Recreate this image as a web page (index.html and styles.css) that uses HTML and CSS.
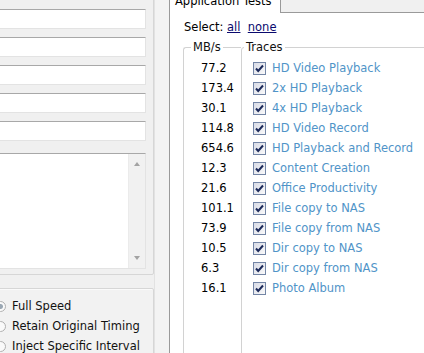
FILE: index.html
```html
<!DOCTYPE html>
<html>
<head>
<meta charset="utf-8">
<link rel="stylesheet" href="styles.css">
</head>
<body>
<div class="app">
  <div class="left">
    <div class="group top-group">
      <div class="input"></div>
      <div class="input"></div>
      <div class="input"></div>
      <div class="input"></div>
      <div class="input"></div>
      <div class="textarea">
        <div class="scrollbar">
          <span class="arrow up"></span>
          <span class="arrow down"></span>
        </div>
      </div>
    </div>
    <div class="group radio-group">
      <div class="radio-row"><span class="radio checked"></span>Full Speed</div>
      <div class="radio-row"><span class="radio"></span>Retain Original Timing</div>
      <div class="radio-row"><span class="radio"></span>Inject Specific Interval</div>
    </div>
  </div>
  <div class="gutter"></div>
  <div class="right">
    <div class="tabstrip">
      <div class="tab">Application Tests</div>
      <div class="tab-rest"></div>
    </div>
    <div class="content">
      <div class="select">Select: <a class="link" href="#">all</a>&nbsp; <a class="link" href="#">none</a></div>
      <div class="sets">
        <fieldset class="fs mbs">
          <legend>MB/s</legend>
          <div class="num">77.2</div>
          <div class="num">173.4</div>
          <div class="num">30.1</div>
          <div class="num">114.8</div>
          <div class="num">654.6</div>
          <div class="num">12.3</div>
          <div class="num">21.6</div>
          <div class="num">101.1</div>
          <div class="num">73.9</div>
          <div class="num">10.5</div>
          <div class="num">6.3</div>
          <div class="num">16.1</div>
        </fieldset>
        <fieldset class="fs traces">
          <legend>Traces</legend>
          <div class="trace"><span class="cb"><svg viewBox="0 0 11 11"><path d="M2 5.5 L4.2 8 L9 2.5" /></svg></span>HD Video Playback</div>
          <div class="trace"><span class="cb"><svg viewBox="0 0 11 11"><path d="M2 5.5 L4.2 8 L9 2.5" /></svg></span>2x HD Playback</div>
          <div class="trace"><span class="cb"><svg viewBox="0 0 11 11"><path d="M2 5.5 L4.2 8 L9 2.5" /></svg></span>4x HD Playback</div>
          <div class="trace"><span class="cb"><svg viewBox="0 0 11 11"><path d="M2 5.5 L4.2 8 L9 2.5" /></svg></span>HD Video Record</div>
          <div class="trace"><span class="cb"><svg viewBox="0 0 11 11"><path d="M2 5.5 L4.2 8 L9 2.5" /></svg></span>HD Playback and Record</div>
          <div class="trace"><span class="cb"><svg viewBox="0 0 11 11"><path d="M2 5.5 L4.2 8 L9 2.5" /></svg></span>Content Creation</div>
          <div class="trace"><span class="cb"><svg viewBox="0 0 11 11"><path d="M2 5.5 L4.2 8 L9 2.5" /></svg></span>Office Productivity</div>
          <div class="trace"><span class="cb"><svg viewBox="0 0 11 11"><path d="M2 5.5 L4.2 8 L9 2.5" /></svg></span>File copy to NAS</div>
          <div class="trace"><span class="cb"><svg viewBox="0 0 11 11"><path d="M2 5.5 L4.2 8 L9 2.5" /></svg></span>File copy from NAS</div>
          <div class="trace"><span class="cb"><svg viewBox="0 0 11 11"><path d="M2 5.5 L4.2 8 L9 2.5" /></svg></span>Dir copy to NAS</div>
          <div class="trace"><span class="cb"><svg viewBox="0 0 11 11"><path d="M2 5.5 L4.2 8 L9 2.5" /></svg></span>Dir copy from NAS</div>
          <div class="trace"><span class="cb"><svg viewBox="0 0 11 11"><path d="M2 5.5 L4.2 8 L9 2.5" /></svg></span>Photo Album</div>
        </fieldset>
      </div>
    </div>
  </div>
</div>
</body>
</html>
```

FILE: styles.css
```css
html, body {
  margin: 0;
  padding: 0;
}
body {
  width: 424px;
  height: 353px;
  overflow: hidden;
  background: #f0f0f0;
}
.app {
  display: flex;
  width: 424px;
  height: 353px;
  overflow: hidden;
  font-family: "DejaVu Sans", Verdana, sans-serif;
  font-size: 11.5px;
  color: #000;
  background: #f0f0f0;
}
.left {
  flex: none;
  width: 164px;
  margin-left: -10px;
  display: flex;
  flex-direction: column;
}
.group {
  border: 1px solid #d6d6d6;
  box-shadow: inset 1px 1px 0 #fafafa;
  border-radius: 2px;
}
.top-group {
  flex: none;
  margin-top: -10px;
  height: 285px;
  box-sizing: border-box;
  padding: 18px 7px 0 6px;
  display: flex;
  flex-direction: column;
  gap: 8px;
}
.input {
  height: 20px;
  flex: none;
  box-sizing: border-box;
  background: #fff;
  border: 1px solid #e3e3e3;
  border-top-color: #a8a8a8;
}
.textarea {
  margin-top: 4px;
  height: 116px;
  flex: none;
  box-sizing: border-box;
  background: #fff;
  border: 1px solid #e3e3e3;
  border-top-color: #a8a8a8;
  display: flex;
  justify-content: flex-end;
}
.scrollbar {
  width: 16px;
  background: #f1f1f1;
  border-left: 1px solid #ebebeb;
  position: relative;
}
.arrow {
  position: absolute;
  left: 5px;
  width: 0;
  height: 0;
  border-left: 3px solid transparent;
  border-right: 3px solid transparent;
}
.arrow.up {
  top: 8px;
  border-bottom: 4px solid #a3a3a3;
}
.arrow.down {
  bottom: 8px;
  border-top: 4px solid #a3a3a3;
}
.radio-group {
  margin-top: 13px;
  flex: none;
  height: 80px;
  box-sizing: border-box;
  padding: 7px 0 0 4px;
  background: #f2f2f2;
}
.radio-row {
  height: 20px;
  line-height: 20px;
  display: flex;
  align-items: center;
  white-space: nowrap;
  color: #111;
}
.radio {
  flex: none;
  width: 11px;
  height: 11px;
  border: 1px solid #b0b0b0;
  border-radius: 50%;
  background: #fafafa;
  margin-right: 6px;
  box-sizing: border-box;
}
.radio.checked {
  background: radial-gradient(circle, #9aa7b3 0 2px, #fafafa 3px);
}
.gutter {
  flex: none;
  width: 14px;
  background: #f3f3f3;
  border-left: 1px solid #e2e2e2;
}
.right {
  flex: 1;
  background: #fff;
  border-left: 1px solid #9a9a9a;
  display: flex;
  flex-direction: column;
  min-width: 0;
}
.tabstrip {
  display: flex;
  height: 13px;
  flex: none;
}
.tab {
  width: 111px;
  flex: none;
  background: #fff;
  border-right: 1px solid #9a9a9a;
  line-height: 14px;
  margin-top: -6px;
  height: 19px;
  padding-left: 5px;
  box-sizing: border-box;
  white-space: nowrap;
}
.tab-rest {
  flex: 1;
  background: #f0f0f0;
  border-bottom: 1px solid #9a9a9a;
}
.content {
  padding: 7px 0 0 13px;
  flex: 1;
}
.select {
  line-height: 14px;
  height: 14px;
  white-space: nowrap;
  padding-left: 1px;
}
.link {
  color: #0a0a6e;
  text-decoration: underline;
}
.sets {
  display: flex;
  margin-top: 6px;
}
.fs {
  margin: 0;
  padding: 4px 0 0 0;
  border: 1px solid #d2d2d2;
  border-radius: 3px;
  height: 330px;
  box-sizing: border-box;
  min-width: 0;
  min-inline-size: 0;
}
.fs legend {
  padding: 0 2px;
  line-height: 14px;
  color: #111;
}
.mbs {
  width: 58px;
  flex: none;
  padding-left: 15px;
  border-right: none;
  border-top-right-radius: 0;
  border-bottom-right-radius: 0;
}
.mbs legend {
  margin-left: -8px;
}
.traces {
  flex: 1;
  margin-right: -10px;
  padding-left: 11px;
}
.traces legend {
  margin-left: -9px;
}
.num {
  height: 20px;
  line-height: 20px;
  padding-left: 2px;
  white-space: nowrap;
}
.trace {
  height: 20px;
  display: flex;
  align-items: center;
  white-space: nowrap;
  color: #5094c8;
}
.cb {
  flex: none;
  width: 13px;
  height: 13px;
  box-sizing: border-box;
  border: 1px solid #7385a5;
  background: linear-gradient(135deg, #d8dbe6, #fafafa);
  margin-right: 6px;
  display: flex;
  align-items: center;
  justify-content: center;
}
.cb svg {
  width: 11px;
  height: 11px;
}
.cb path {
  fill: none;
  stroke: #1c2a5a;
  stroke-width: 2;
}
```
